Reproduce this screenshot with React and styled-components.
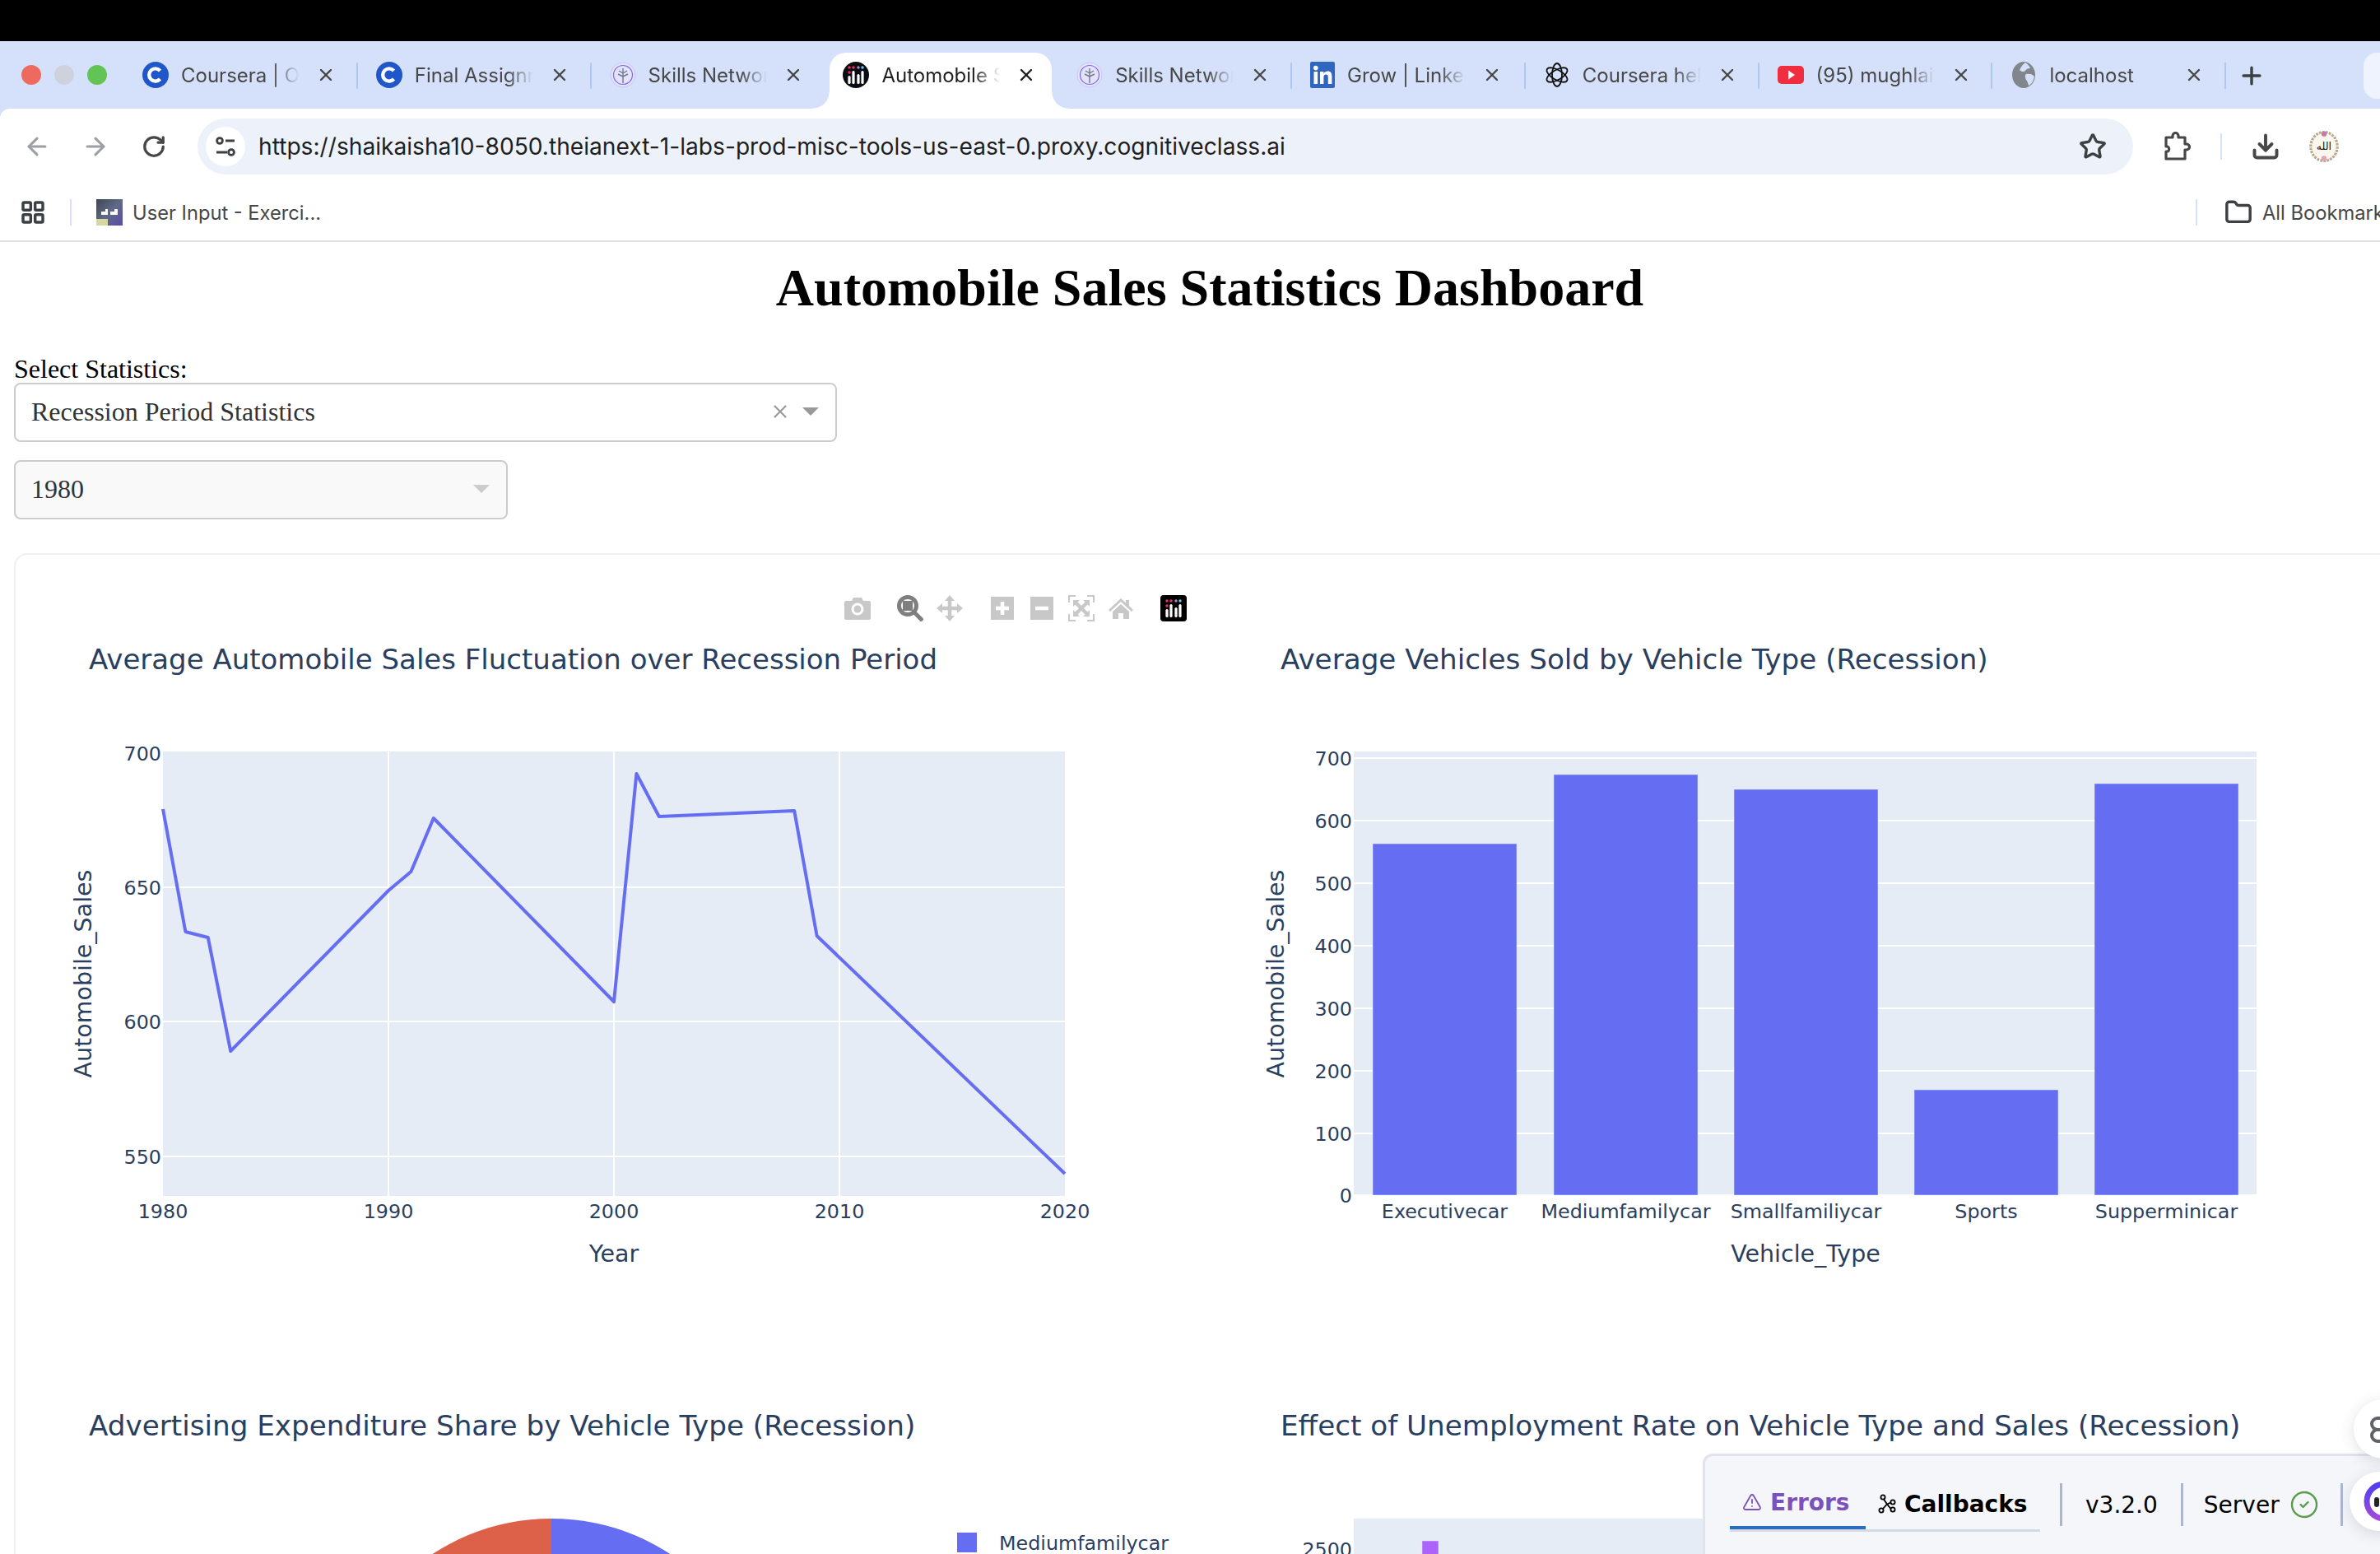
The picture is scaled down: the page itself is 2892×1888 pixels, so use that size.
import React from 'react';
import styled, { createGlobalStyle } from 'styled-components';
import { ArrowLeft, ArrowRight, CircleCheck, Download, Folder, LayoutGrid, Plus, RotateCw, Star, TriangleAlert, X } from 'lucide-react';

const GlobalStyle = createGlobalStyle`
  html, body {
    margin: 0;
    padding: 0;
    width: 2892px;
    height: 1888px;
    overflow: hidden;
    background: #fff;
  }
`;

const Screen = styled.div`
  width: 2892px;
  height: 1888px;
  overflow: hidden;
  position: relative;
  display: flex;
  flex-direction: column;
`;

const TopBlack = styled.div`
  height: 50px;
  flex: none;
  background: #000;
`;

const Chrome = styled.div`
  flex: none;
  background: #d5e1fb;
  font-family: Inter, "Liberation Sans", sans-serif;
`;

const TabStrip = styled.div`
  height: 82px;
  padding: 14px 0 0 26px;
  box-sizing: border-box;
  display: flex;
  align-items: flex-start;
`;

const Lights = styled.div`
  display: flex;
  gap: 16px;
  margin: 15px 21px 0 0;
`;

const Light = styled.span`
  width: 24px;
  height: 24px;
  border-radius: 50%;
  background: ${p => p.$color};
`;

const Tab = styled.div`
  position: relative;
  width: 281.8px;
  height: 68px;
  flex: none;
  padding: 0 0 14px 22px;
  box-sizing: border-box;
  display: flex;
  align-items: center;
  color: ${p => (p.$active ? '#1f1f1f' : '#474747')};
  &::before {
    content: '';
    display: ${p => (p.$active ? 'block' : 'none')};
    position: absolute;
    inset: 0 6px 0 6px;
    background: #fff;
    border-radius: 20px 20px 0 0;
  }
  & > * {
    position: relative;
  }
`;

const Flare = styled.span`
  position: absolute !important;
  bottom: 0;
  ${p => (p.$right ? 'right: -14px;' : 'left: -14px;')}
  width: 20px;
  height: 20px;
  background: radial-gradient(circle at ${p => (p.$right ? '100% 0' : '0 0')}, #d5e1fb 19px, #fff 20px);
`;

const TabLabel = styled.span`
  width: 144px;
  margin-left: 15px;
  font-size: 24px;
  white-space: nowrap;
  overflow: hidden;
  mask-image: linear-gradient(to right, #000 ${p => (p.$full ? '100%' : '78%')}, transparent 100%);
`;

const TabClose = styled(X)`
  margin-left: 20px;
  flex: none;
`;

const TabSep = styled.span`
  width: 2px;
  height: 32px;
  margin-top: 12px;
  flex: none;
  border-radius: 1px;
  background: ${p => (p.$hidden ? 'transparent' : '#aec6f2')};
`;

const NewTab = styled(Plus)`
  margin: 11px 0 0 14px;
  flex: none;
  color: #3c4043;
`;

const SearchPill = styled.span`
  width: 20px;
  height: 56px;
  margin-left: auto;
  border-radius: 16px 0 0 16px;
  background: #eef3fd;
`;

const Toolbar = styled.div`
  height: 80px;
  padding-top: 12px;
  box-sizing: border-box;
  background: #fff;
  border-top-left-radius: 12px;
  display: flex;
  align-items: flex-start;
  position: relative;
`;

const NavIcon = styled.span`
  position: relative;
  flex: none;
  width: ${p => p.$w || 71}px;
  height: 68px;
  display: flex;
  align-items: center;
  justify-content: center;
  color: ${p => p.$color || '#474747'};
`;

const NavGroup = styled.div`
  width: 240px;
  padding-left: 9px;
  box-sizing: border-box;
  display: flex;
  flex: none;
`;

const UrlBar = styled.div`
  width: 2352px;
  height: 68px;
  flex: none;
  padding: 0 32px 0 10px;
  box-sizing: border-box;
  border-radius: 34px;
  background: #edf2fa;
  display: flex;
  align-items: center;
`;

const SiteInfo = styled.span`
  width: 48px;
  height: 48px;
  flex: none;
  border-radius: 50%;
  background: #fff;
  display: flex;
  align-items: center;
  justify-content: center;
`;

const UrlText = styled.span`
  margin-left: 16px;
  font-size: 28.16px;
  color: #1f1f1f;
  white-space: nowrap;
`;

const UrlStar = styled(Star)`
  margin-left: auto;
  color: #3c4043;
`;

const ToolSep = styled.span`
  width: 2px;
  height: 32px;
  margin-top: 18px;
  background: #d5e1fb;
  flex: none;
`;

const BookmarksBar = styled.div`
  height: 82px;
  box-sizing: border-box;
  padding-top: 12px;
  background: #fff;
  border-bottom: 2px solid #e0e0e0;
  display: flex;
  align-items: center;
  font-size: 23.7px;
  color: #474747;
`;

const AppsIcon = styled(LayoutGrid)`
  margin-left: 24px;
  flex: none;
  color: #3c4043;
`;

const BarSep = styled.span`
  width: 2px;
  height: 32px;
  margin-left: ${p => p.$gap}px;
  flex: none;
  background: #d5e1fb;
`;

const BookmarkThumb = styled.svg`
  margin-left: 30px;
  flex: none;
`;

const BookmarkText = styled.span`
  margin-left: 12px;
  white-space: nowrap;
`;

const AllBookmarks = styled.div`
  margin-left: auto;
  width: 224px;
  flex: none;
  overflow: hidden;
  display: flex;
  align-items: center;
  white-space: nowrap;
`;

const FolderIcon = styled(Folder)`
  margin-left: 33px;
  flex: none;
  color: #3c4043;
`;

const Page = styled.main`
  width: 2940px;
  flex: none;
  padding: 0 17px;
  box-sizing: border-box;
  font-family: "Liberation Serif", serif;
  color: #000;
`;

const Title = styled.h1`
  margin: 19px 0 46px;
  text-align: center;
  font-size: 64px;
  line-height: 74px;
  font-weight: 700;
`;

const FieldLabel = styled.label`
  display: block;
  height: 32px;
  font-size: 32px;
  line-height: 30px;
`;

const Select = styled.div`
  width: ${p => p.$w}px;
  height: 72px;
  margin-bottom: 22px;
  padding: 0 20px 2px 19px;
  box-sizing: border-box;
  border: 2px solid #ccc;
  border-radius: 8px;
  background: ${p => (p.$disabled ? '#f9f9f9' : '#fff')};
  display: flex;
  align-items: center;
  font-size: 32px;
  color: #333;
`;

const SelectClear = styled(X)`
  margin-left: auto;
  color: #999;
`;

const Caret = styled.span`
  width: 0;
  height: 0;
  margin-left: ${p => (p.$alone ? 'auto' : '14px')};
  border-style: solid;
  border-width: 10px 10px 0;
  border-color: ${p => (p.$alone ? '#ccc' : '#999')} transparent transparent;
`;

const Card = styled.section`
  margin-top: 41px;
  padding: 50px 0 0 19px;
  box-sizing: border-box;
  border: 2px solid #f0f0f0;
  border-radius: 16px;
  display: grid;
  grid-template-columns: 1447px 1447px;
  grid-auto-rows: 931px;
`;

const ChartCell = styled.div`
  position: relative;
`;

const ChartSvg = styled.svg`
  display: block;
  width: 1447px;
  height: 931px;
  font-family: "DejaVu Sans", Verdana, sans-serif;
  fill: #2a3f5f;
`;

const ChartTitle = styled.text`
  font-size: ${p => p.$size || 34.2}px;
`;

const Tick = styled.text`
  font-size: 23.8px;
  text-anchor: ${p => p.$anchor || 'middle'};
`;

const AxisTitle = styled.text`
  font-size: 28.5px;
  text-anchor: middle;
`;

const PlotBg = styled.rect`
  fill: #e5ecf6;
`;

const GridLine = styled.line`
  stroke: #fff;
  stroke-width: 2;
`;

const SeriesLine = styled.polyline`
  fill: none;
  stroke: #656ef2;
  stroke-width: 4;
  stroke-linejoin: round;
`;

const Bar = styled.rect`
  fill: ${p => p.$fill || '#656ef2'};
  stroke: #e5ecf6;
  stroke-opacity: 0.5;
  stroke-width: 1;
`;

const Modebar = styled.div`
  position: absolute;
  top: -1px;
  right: 43px;
  display: flex;
  gap: 32px;
`;

const ModeGroup = styled.div`
  display: flex;
  gap: 16px;
`;

const DebugPanel = styled.div`
  position: absolute;
  left: 2069px;
  top: 1766px;
  width: 900px;
  height: 200px;
  padding: 0 0 0 30px;
  box-sizing: border-box;
  border: 3px solid #e1e3ef;
  border-radius: 12px;
  background: #f5f6fa;
  display: flex;
  align-items: flex-start;
  font-family: "DejaVu Sans", Verdana, sans-serif;
  font-size: 28px;
  color: #000;
`;

const DebugTabs = styled.div`
  margin-top: 33px;
  height: 56px;
  display: flex;
  border-bottom: 3px solid #d3d9e6;
`;

const DebugTab = styled.div`
  width: ${p => p.$w}px;
  height: 56px;
  padding-left: ${p => p.$pad}px;
  box-sizing: border-box;
  display: flex;
  align-items: center;
  padding-bottom: 6px;
  gap: 10px;
  font-size: 28px;
  font-weight: 700;
  color: ${p => (p.$active ? '#7a52bd' : '#000')};
  border-bottom: ${p => (p.$active ? '4px solid #2a6fbb' : '0')};
`;

const DebugSep = styled.span`
  width: 3px;
  height: 52px;
  margin: 33px ${p => p.$right || 28}px 0 ${p => p.$left || 0}px;
  flex: none;
  background: #aeb5cf;
`;

const DebugItem = styled.span`
  margin: 33px ${p => p.$right}px 0 0;
  height: 52px;
  display: flex;
  align-items: center;
  gap: 12px;
`;

const ServerOk = styled(CircleCheck)`
  color: #5a9b4f;
  flex: none;
`;

const FloatButton = styled.div`
  position: absolute;
  left: ${p => p.$left}px;
  top: ${p => p.$top}px;
  width: 72px;
  height: 72px;
  border-radius: 50%;
  background: #fff;
  box-shadow: 0 4px 18px rgba(60, 60, 90, 0.16);
`;

const PlotlyBadge = ({ size = 32, round }) => (
  <svg width={size} height={size} viewBox="0 0 32 32" style={{ flex: 'none' }}>
    {round ? <circle cx="16" cy="16" r="16" fill="#0b0b12" /> : <rect width="32" height="32" rx="4" fill="#000" />}
    <circle cx="8" cy="7" r="1.7" fill="#ef2d6b" />
    <circle cx="13" cy="7" r="1.7" fill="#ef2d6b" />
    <circle cx="19" cy="7" r="1.7" fill="#a78bd6" />
    <circle cx="24" cy="7" r="1.7" fill="#63d1f4" />
    <circle cx="8" cy="13" r="1.7" fill="#ef2d6b" />
    <g fill="#fff">
      <rect x="6.4" y="17" width="3.2" height="10" rx="1.6" />
      <rect x="11.4" y="11" width="3.2" height="16" rx="1.6" />
      <rect x="17.4" y="15" width="3.2" height="12" rx="1.6" />
      <rect x="22.4" y="11" width="3.2" height="16" rx="1.6" />
    </g>
  </svg>
);

const CourseraIcon = () => (
  <svg width="32" height="32" viewBox="0 0 32 32" style={{ flex: 'none' }}>
    <circle cx="16" cy="16" r="16" fill="#1f56c9" />
    <path d="M21.5 11a7.6 7.6 0 1 0 0 10" fill="none" stroke="#fff" strokeWidth="4.4" />
  </svg>
);

const SkillsIcon = () => (
  <svg width="32" height="32" viewBox="0 0 32 32" style={{ flex: 'none' }}>
    <circle cx="16" cy="16" r="15" fill="#e4e3fb" stroke="#c9c6f6" />
    <circle cx="16" cy="16" r="11.5" fill="none" stroke="#7a6ae8" strokeWidth="1.2" />
    <path d="M16 26V8M16 14l-5-3M16 14l5-3M16 18l-6-3M16 18l6-3" stroke="#6f7a8f" strokeWidth="1.4" fill="none" />
  </svg>
);

const LinkedInIcon = () => (
  <svg width="30" height="32" viewBox="0 0 30 32" style={{ flex: 'none' }}>
    <rect width="30" height="32" rx="2" fill="#2f67c0" />
    <rect x="4.5" y="12" width="4.6" height="15" fill="#fff" />
    <circle cx="6.8" cy="7.6" r="2.8" fill="#fff" />
    <path d="M12 12h4.4v2.4c1-1.8 2.8-2.8 5-2.8 4 0 5 2.6 5 6.4V27h-4.6v-8c0-2-.6-3.4-2.6-3.4s-2.8 1.5-2.8 3.4v8H12z" fill="#fff" />
  </svg>
);

const GptIcon = () => (
  <svg width="32" height="32" viewBox="0 0 32 32" fill="none" stroke="#111" strokeWidth="1.8" style={{ flex: 'none' }}>
    <ellipse cx="16" cy="16" rx="6" ry="14" />
    <ellipse cx="16" cy="16" rx="6" ry="14" transform="rotate(60 16 16)" />
    <ellipse cx="16" cy="16" rx="6" ry="14" transform="rotate(120 16 16)" />
  </svg>
);

const YoutubeIcon = () => (
  <svg width="32" height="32" viewBox="0 0 32 32" style={{ flex: 'none' }}>
    <rect y="0" width="32" height="22" transform="translate(0 5)" rx="5" fill="#ef2f40" />
    <path d="M13 10.5l8 5.5-8 5.5z" fill="#fff" />
  </svg>
);

const GlobeIcon = () => (
  <svg width="28" height="32" viewBox="0 0 28 32" style={{ flex: 'none', marginLeft: 2, marginRight: 2 }}>
    <ellipse cx="14" cy="16" rx="14" ry="16" fill="#80868b" />
    <path d="M16 1c3 2 5 4 6 7-3 0-5 1-6 3-2 2-5 1-7-1 2-4 4-7 7-9zM17 15c4-1 8 0 10 3-1 5-3 9-7 11-1-3-1-5-3-7-1-3-2-5 0-7z" fill="#d5e1fb" />
  </svg>
);

const TuneIcon = () => (
  <svg width="26" height="26" viewBox="0 0 26 26" fill="none" stroke="#3c4043" strokeWidth="2.8">
    <circle cx="6" cy="6" r="3.4" />
    <path d="M13 6h11M2 20h13" />
    <circle cx="20" cy="20" r="3.4" />
  </svg>
);

const PuzzleIcon = () => (
  <svg width="34" height="36" viewBox="0 0 34 36" fill="none" stroke="#474747" strokeWidth="3.2" strokeLinejoin="round">
    <path d="M4 7h8V5a3.5 3.5 0 0 1 7 0v2h8v8h2a3.5 3.5 0 0 1 0 7h-2v11H4v-9h2a3.5 3.5 0 0 0 0-6H4z" />
  </svg>
);

const AvatarIcon = () => (
  <svg width="40" height="42" viewBox="0 0 40 42">
    <ellipse cx="20" cy="21" rx="18" ry="19.5" fill="#fbf7ef" stroke="#b9a88a" strokeWidth="3.5" strokeDasharray="3 1.5" />
    <circle cx="20" cy="4" r="3.5" fill="#c977a6" />
    <circle cx="20" cy="37" r="3.5" fill="#e3a3b8" />
    <text x="20" y="26" textAnchor="middle" fontSize="14" fontFamily="DejaVu Sans" fill="#111">الله</text>
  </svg>
);

const ThumbIcon = () => (
  <BookmarkThumb width="32" height="32" viewBox="0 0 32 32">
    <defs>
      <linearGradient id="thumb" x1="0" y1="0" x2="1" y2="1">
        <stop offset="0" stopColor="#3d4657" />
        <stop offset="0.5" stopColor="#606a86" />
        <stop offset="1" stopColor="#5c4aa8" />
      </linearGradient>
    </defs>
    <rect width="32" height="32" fill="url(#thumb)" />
    <rect y="24" width="14" height="8" fill="#d9d7a0" />
    <path d="M6 19v-4h5v-3h3v7H6zM17 19v-4h5v-3h4v7h-9z" fill="#fff" />
  </BookmarkThumb>
);

const CallbackIcon = () => (
  <svg width="22" height="24" viewBox="0 0 22 24" fill="none" stroke="#000" strokeWidth="1.8">
    <circle cx="6" cy="4" r="2.6" />
    <circle cx="18" cy="10" r="2.6" />
    <circle cx="4" cy="20" r="2.6" />
    <circle cx="18" cy="19" r="2.6" />
    <path d="M7 6.4l4 6M15.5 10.500l-4.500 2M6 18l5-5.600M15.600 18l-4.600-5.600" />
  </svg>
);

// plotly modebar glyphs, 32x32 box
const ModeIcon = ({ name, active }) => {
  const fill = active ? '#7f7f7f' : '#c8c8c8';
  return (
    <svg width="32" height="32" viewBox="0 0 32 32" fill={fill}>
      {name === 'camera' && (
        <>
          <path d="M2 7h7l2-4h10l2 4h7a2 2 0 0 1 2 2v19a2 2 0 0 1-2 2H2a2 2 0 0 1-2-2V9a2 2 0 0 1 2-2z" />
          <circle cx="16" cy="17" r="7.5" fill="#fff" />
          <circle cx="16" cy="17" r="4.500" />
        </>
      )}
      {name === 'zoom' && (
        <>
          <circle cx="13" cy="13" r="10.5" fill="none" stroke={fill} strokeWidth="5" />
          <rect x="7" y="7" width="12" height="12" />
          <path d="M21 21l10 10" stroke={fill} strokeWidth="5" />
        </>
      )}
      {name === 'pan' && (
        <>
          <path d="M16 6v20M6 16h20" stroke={fill} strokeWidth="4.5" />
          <path d="M16 0l6 7H10zM16 32l-6-7h12zM0 16l7-6v12zM32 16l-7 6V10z" />
        </>
      )}
      {name === 'plus' && (
        <>
          <rect x="2" y="2" width="28" height="28" />
          <path d="M16 8v16M8 16h16" stroke="#fff" strokeWidth="4.5" />
        </>
      )}
      {name === 'minus' && (
        <>
          <rect x="2" y="2" width="28" height="28" />
          <path d="M8 16h16" stroke="#fff" strokeWidth="4.5" />
        </>
      )}
      {name === 'autoscale' && (
        <>
          <path d="M1 9V1h8M23 1h8v8M31 23v8h-8M9 31H1v-8" fill="none" stroke={fill} strokeWidth="2" />
          <path d="M9 9l14 14M23 9L9 23" stroke={fill} strokeWidth="4.5" />
          <path d="M6 6h8l-8 8zM26 6v8l-8-8zM26 26h-8l8-8zM6 26v-8l8 8z" />
        </>
      )}
      {name === 'home' && (
        <path d="M16 4L1 18l2 2 13-12 13 12 2-2-5-5V6h-4v3.500zM6 20v9h7v-7h6v7h7v-9L16 11z" />
      )}
    </svg>
  );
};

const tabs = [
  { icon: <CourseraIcon />, label: 'Coursera | Online Courses', sep: true },
  { icon: <CourseraIcon />, label: 'Final Assignment', sep: true },
  { icon: <SkillsIcon />, label: 'Skills Network', sep: false },
  { icon: <PlotlyBadge round />, label: 'Automobile Sales', active: true, sep: false },
  { icon: <SkillsIcon />, label: 'Skills Network', sep: true },
  { icon: <LinkedInIcon />, label: 'Grow | LinkedIn', sep: true },
  { icon: <GptIcon />, label: 'Coursera help', sep: true },
  { icon: <YoutubeIcon />, label: '(95) mughlai', sep: true },
  { icon: <GlobeIcon />, label: 'localhost', full: true, sep: true },
];

const lineYears = [1980, 1981, 1982, 1983, 1990, 1991, 1992, 2000, 2001, 2002, 2008, 2009, 2020];
const lineTops = [259, 408, 415, 553, 358, 335, 270, 493, 216, 268, 261, 413, 702];
const linePoints = lineYears.map((yr, i) => `${160 + (yr - 1980) * 27.4},${lineTops[i]}`).join(' ');

const barData = [
  { name: 'Executivecar', x: 183, top: 301 },
  { name: 'Mediumfamilycar', x: 403, top: 217 },
  { name: 'Smallfamiliycar', x: 622, top: 235 },
  { name: 'Sports', x: 841, top: 600 },
  { name: 'Supperminicar', x: 1060, top: 228 },
];

const LineChart = () => (
  <ChartSvg viewBox="0 0 1447 931">
    <ChartTitle $size={34} x="70" y="89">Average Automobile Sales Fluctuation over Recession Period</ChartTitle>
    <PlotBg x="160" y="189" width="1096" height="540" />
    {[434, 708, 982].map(x => <GridLine key={x} x1={x} x2={x} y1="189" y2="729" />)}
    {[354, 517, 681].map(y => <GridLine key={y} x1="160" x2="1256" y1={y} y2={y} />)}
    <SeriesLine points={linePoints} />
    {[['700', 191], ['650', 354], ['600', 517], ['550', 681]].map(([t, y]) => (
      <Tick key={t} $anchor="end" x="158" y={y + 9}>{t}</Tick>
    ))}
    {[['1980', 160], ['1990', 434], ['2000', 708], ['2010', 982], ['2020', 1256]].map(([t, x]) => (
      <Tick key={t} x={x} y="756">{t}</Tick>
    ))}
    <AxisTitle x="708" y="809">Year</AxisTitle>
    <AxisTitle transform="translate(73 459) rotate(-90)">Automobile_Sales</AxisTitle>
  </ChartSvg>
);

const BarChart = () => (
  <ChartSvg viewBox="0 0 1447 931">
    <ChartTitle x="71" y="89">Average Vehicles Sold by Vehicle Type (Recession)</ChartTitle>
    <PlotBg x="160" y="189" width="1097" height="540" />
    {[197, 273, 349, 425, 501, 577, 653, 728].map(y => <GridLine key={y} x1="160" x2="1257" y1={y} y2={y} />)}
    {barData.map(b => <Bar key={b.name} x={b.x} y={b.top} width="175" height={728 - b.top} />)}
    {[['700', 197], ['600', 273], ['500', 349], ['400', 425], ['300', 501], ['200', 577], ['100', 653], ['0', 728]].map(([t, y]) => (
      <Tick key={t} $anchor="end" x="158" y={y + 9}>{t}</Tick>
    ))}
    {barData.map(b => <Tick key={b.name} x={b.x + 87.5} y="756">{b.name}</Tick>)}
    <AxisTitle x="709" y="809">Vehicle_Type</AxisTitle>
    <AxisTitle transform="translate(75 459) rotate(-90)">Automobile_Sales</AxisTitle>
  </ChartSvg>
);

const PieChart = () => (
  <ChartSvg viewBox="0 0 1447 931">
    <ChartTitle x="70" y="89">Advertising Expenditure Share by Vehicle Type (Recession)</ChartTitle>
    <path d="M632 190a264 264 0 0 1 0 528z" fill="#656ef2" />
    <path d="M632 190a264 264 0 0 0 0 528z" fill="#dd6048" />
    <rect x="1125" y="207" width="24" height="24" fill="#656ef2" />
    <Tick $anchor="start" x="1176" y="228">Mediumfamilycar</Tick>
  </ChartSvg>
);

const BubbleChart = () => (
  <ChartSvg viewBox="0 0 1447 931">
    <ChartTitle x="71" y="89">Effect of Unemployment Rate on Vehicle Type and Sales (Recession)</ChartTitle>
    <PlotBg x="160" y="190" width="1097" height="540" />
    <Bar $fill="#ab63fa" x="243" y="217" width="20" height="300" />
    <Tick $anchor="end" x="158" y="236">2500</Tick>
  </ChartSvg>
);

const App = () => (
  <Screen>
    <GlobalStyle />
    <TopBlack />
    <Chrome>
      <TabStrip>
        <Lights>
          <Light $color="#ee6a5f" />
          <Light $color="#ced2dc" />
          <Light $color="#61c454" />
        </Lights>
        {tabs.map((t, i) => (
          <React.Fragment key={i}>
            <Tab $active={t.active}>
              {t.active && <Flare />}
              {t.active && <Flare $right />}
              {t.icon}
              <TabLabel $full={t.full}>{t.label}</TabLabel>
              <TabClose size={24} strokeWidth={2.4} />
            </Tab>
            <TabSep $hidden={!t.sep} />
          </React.Fragment>
        ))}
        <NewTab size={34} strokeWidth={2.4} />
        <SearchPill />
      </TabStrip>
      <Toolbar>
        <NavGroup>
          <NavIcon $color="#9aa0a6"><ArrowLeft size={34} strokeWidth={2.2} /></NavIcon>
          <NavIcon $color="#9aa0a6"><ArrowRight size={34} strokeWidth={2.2} /></NavIcon>
          <NavIcon><RotateCw size={30} strokeWidth={2.6} /></NavIcon>
        </NavGroup>
        <UrlBar>
          <SiteInfo><TuneIcon /></SiteInfo>
          <UrlText>https://shaikaisha10-8050.theianext-1-labs-prod-misc-tools-us-east-0.proxy.cognitiveclass.ai</UrlText>
          <UrlStar size={34} strokeWidth={2.4} />
        </UrlBar>
        <NavIcon $w={106}><PuzzleIcon /></NavIcon>
        <ToolSep />
        <NavIcon $w={106}><Download size={36} strokeWidth={2.6} /></NavIcon>
        <NavIcon $w={36}><AvatarIcon /></NavIcon>
      </Toolbar>
      <BookmarksBar>
        <AppsIcon size={32} strokeWidth={2.6} />
        <BarSep $gap={29} />
        <ThumbIcon />
        <BookmarkText>User Input - Exerci...</BookmarkText>
        <AllBookmarks>
          <BarSep $gap={0} />
          <FolderIcon size={34} strokeWidth={2.4} />
          <BookmarkText>All Bookmarks</BookmarkText>
        </AllBookmarks>
      </BookmarksBar>
    </Chrome>
    <Page>
      <Title>Automobile Sales Statistics Dashboard</Title>
      <FieldLabel>Select Statistics:</FieldLabel>
      <Select $w={1000}>
        Recession Period Statistics
        <SelectClear size={26} strokeWidth={2} />
        <Caret />
      </Select>
      <Select $w={600} $disabled>
        1980
        <Caret $alone />
      </Select>
      <Card>
        <ChartCell>
          <LineChart />
          <Modebar>
            <ModeGroup><ModeIcon name="camera" /></ModeGroup>
            <ModeGroup><ModeIcon name="zoom" active /><ModeIcon name="pan" /></ModeGroup>
            <ModeGroup>
              <ModeIcon name="plus" />
              <ModeIcon name="minus" />
              <ModeIcon name="autoscale" />
              <ModeIcon name="home" />
            </ModeGroup>
            <PlotlyBadge />
          </Modebar>
        </ChartCell>
        <ChartCell><BarChart /></ChartCell>
        <ChartCell><PieChart /></ChartCell>
        <ChartCell><BubbleChart /></ChartCell>
      </Card>
    </Page>
    <DebugPanel>
      <DebugTabs>
        <DebugTab $active $w={165} $pad={15}><TriangleAlert size={24} strokeWidth={1.8} />Errors</DebugTab>
        <DebugTab $w={212} $pad={15}><CallbackIcon />Callbacks</DebugTab>
      </DebugTabs>
      <DebugSep $left={24} />
      <DebugItem $right={28}>v3.2.0</DebugItem>
      <DebugSep $right={25} />
      <DebugItem $right={26}>Server<ServerOk size={36} strokeWidth={1.6} /></DebugItem>
      <DebugSep />
    </DebugPanel>
    <FloatButton $left={2860} $top={1700}>
      <svg width="72" height="72" viewBox="0 0 72 72" fill="none" stroke="#5f6368" strokeWidth="4">
        <rect x="22" y="23" width="40" height="14" rx="7" />
        <rect x="22" y="37" width="40" height="14" rx="7" />
      </svg>
    </FloatButton>
    <FloatButton $left={2855} $top={1788}>
      <svg width="72" height="72" viewBox="0 0 72 72" fill="none">
        <defs>
          <linearGradient id="dashRing" x1="0" y1="0" x2="0" y2="1">
            <stop offset="0" stopColor="#4f3ff0" />
            <stop offset="1" stopColor="#a04bd8" />
          </linearGradient>
        </defs>
        <circle cx="42" cy="36" r="21" stroke="url(#dashRing)" strokeWidth="7" />
        <rect x="30" y="31" width="6" height="12" rx="3" fill="#222" />
      </svg>
    </FloatButton>
  </Screen>
);

export default App;
